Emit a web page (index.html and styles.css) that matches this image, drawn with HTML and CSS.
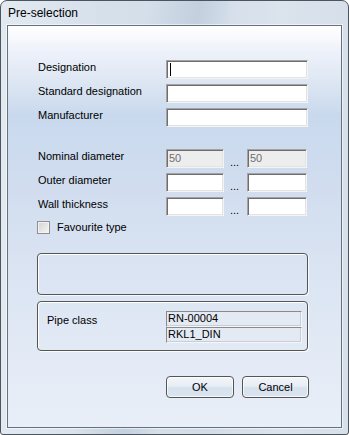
FILE: index.html
```html
<!DOCTYPE html>
<html lang="en">
	<head>
		<meta charset="UTF-8">
		<title>Pre-selection</title>
		<link rel="stylesheet" href="styles.css">
	</head>
	<body>
		<div class="window">
			<div class="titlebar">Pre-selection</div>
			<div class="panel">
				<div class="fields">
					<div class="lbl">Designation</div>
					<div class="edit wide"><span class="caret"></span></div>
					<div class="lbl">Standard designation</div>
					<div class="edit wide"></div>
					<div class="lbl">Manufacturer</div>
					<div class="edit wide"></div>
				</div>

				<div class="fields range">
					<div class="lbl">Nominal diameter</div>
					<div class="edit off">50</div>
					<div class="dots">...</div>
					<div class="edit off">50</div>
					<div class="lbl">Outer diameter</div>
					<div class="edit"></div>
					<div class="dots">...</div>
					<div class="edit"></div>
					<div class="lbl">Wall thickness</div>
					<div class="edit"></div>
					<div class="dots">...</div>
					<div class="edit"></div>
				</div>

				<label class="check"><span class="box"></span>Favourite type</label>

				<div class="group empty"></div>

				<div class="group pipe">
					<div class="lbl">Pipe class</div>
					<div class="values">
						<div class="value">RN-00004</div>
						<div class="value">RKL1_DIN</div>
					</div>
				</div>

				<div class="buttons">
					<button class="btn ok">OK</button>
					<button class="btn cancel">Cancel</button>
				</div>
			</div>
		</div>
	</body>
</html>
```

FILE: styles.css
```css
* {
	margin: 0;
	padding: 0;
	box-sizing: border-box;
}

body {
	width: 349px;
	height: 435px;
	overflow: hidden;
	background: #fff;
	font-family: "Liberation Sans", Arial, sans-serif;
	font-size: 11px;
	color: #000;
}

.window {
	width: 349px;
	height: 435px;
	border: 1px solid #4c545e;
	border-radius: 7px 7px 3px 3px;
	padding: 0 6px 6px;
	display: flex;
	flex-direction: column;
	background:
		linear-gradient(100deg, rgba(255,255,255,0) 35%, rgba(180,196,214,.55) 47%, rgba(255,255,255,0) 55%),
		linear-gradient(to right, #e2e9f1 0%, #d6e0eb 30%, #d3dde9 60%, #dbe3ed 80%, #d6dfea 100%);
}

.titlebar {
	height: 24px;
	padding-left: 1px;
	display: flex;
	align-items: center;
	font-size: 12px;
	color: #000;
}

.panel {
	flex: 1;
	border: 1px solid #67717d;
	box-shadow: 0 0 0 1px rgba(255,255,255,.55);
	padding: 34px 0 0 29px;
	background: linear-gradient(to bottom, #ffffff 0%, #eef2fa 6%, #dbe5f2 15%, #c9d9ed 22%, #d1ddef 40%, #dce5f3 65%, #e9eff8 100%);
}

.fields {
	display: grid;
	grid-template-columns: 129px 58px 23px 60px;
	row-gap: 5px;
}

.fields.range {
	margin-top: 22px;
}

.lbl {
	line-height: 13px;
	padding: 1px 0 0 1px;
	white-space: nowrap;
}

.edit {
	height: 19px;
	background: #fff;
	border: 1px solid;
	border-color: #a3a3a3 #f4f4f4 #f4f4f4 #a3a3a3;
	box-shadow: inset 1px 1px 0 #6e6e6e, inset -1px -1px 0 #e3e3e3;
	padding: 2px 0 0 2px;
	line-height: 13px;
}

.edit.wide {
	grid-column: span 3;
	margin-right: -1px;
}

.edit.off {
	background: #ededed;
	color: #6f6f6f;
}

.caret {
	display: block;
	width: 1px;
	height: 13px;
	margin: 0 0 0 1px;
	background: #000;
}

.dots {
	align-self: end;
	text-align: center;
	line-height: 13px;
	margin-bottom: -1px;
	padding-right: 2px;
}

.check {
	display: flex;
	align-items: center;
	margin-top: 5px;
	height: 13px;
	line-height: 13px;
}

.box {
	width: 13px;
	height: 13px;
	margin-right: 7px;
	border: 1px solid #8e8f8f;
	background: linear-gradient(135deg, #d2d2d2, #f6f6f6);
	box-shadow: inset 0 0 0 1px #f3f3f3;
}

.group {
	width: 271px;
	border: 1px solid #555;
	border-radius: 4px;
	box-shadow: inset 1px 1px 0 #fff, 1px 1px 0 rgba(255,255,255,.8);
}

.group.empty {
	height: 42px;
	margin-top: 19px;
}

.group.pipe {
	height: 50px;
	margin-top: 6px;
	padding: 9px 0 0 8px;
	display: flex;
}

.group.pipe .lbl {
	width: 120px;
	padding-top: 3px;
}

.values {
	width: 136px;
}

.value {
	height: 16px;
	border: 1px solid;
	border-color: #8a8a8a #f6f6f6 #f6f6f6 #8a8a8a;
	box-shadow: inset -1px -1px 0 #c9ced6;
	background: #e4eaf4;
	padding-left: 1px;
	line-height: 12px;
}

.buttons {
	display: flex;
	gap: 8px;
	margin: 25px 0 0 129px;
}

.btn {
	height: 22px;
	border: 1px solid #555;
	border-radius: 4px;
	font-family: inherit;
	font-size: 11px;
	color: #000;
	background: linear-gradient(to bottom, #f3f6fa 0%, #e6edf5 45%, #d6e1ee 55%, #dbe5f1 100%);
	box-shadow: inset 0 0 0 1px rgba(255,255,255,.7);
}

.btn.ok {
	width: 68px;
}

.btn.cancel {
	width: 67px;
}
```
